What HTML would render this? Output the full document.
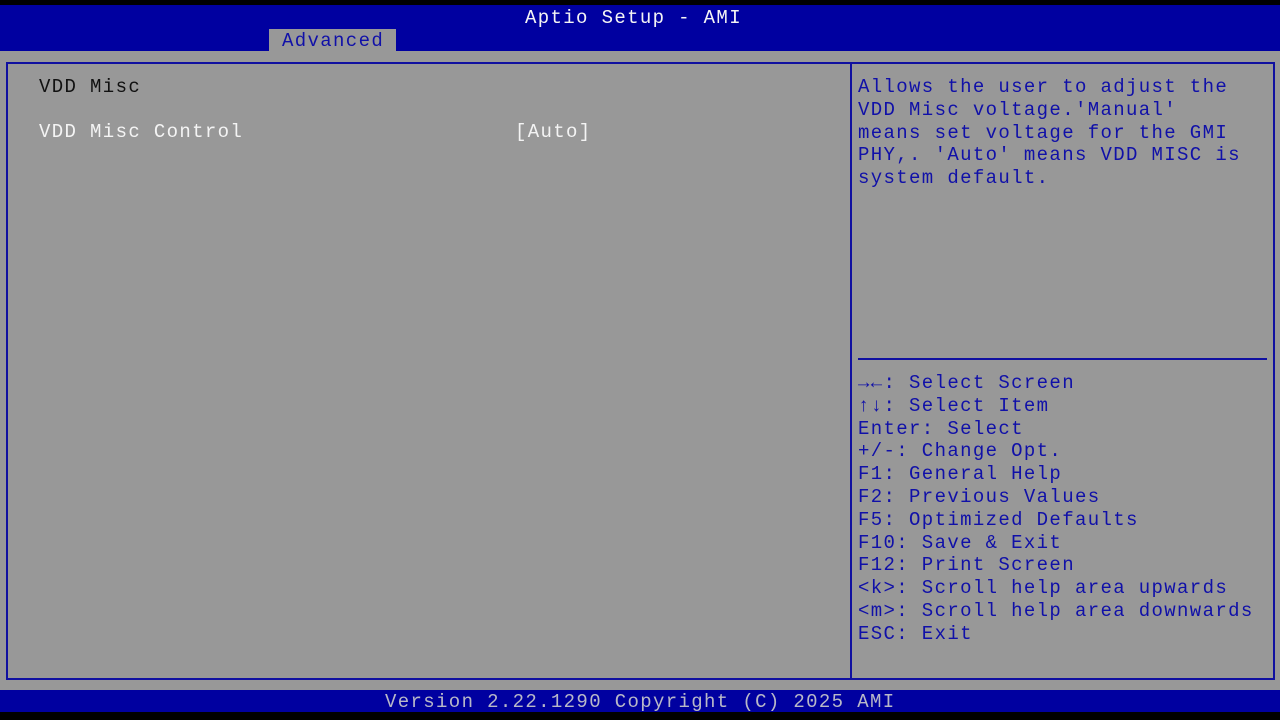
<!DOCTYPE html>
<html><head><style>
body{margin:0;width:1280px;height:720px;background:#000;position:relative;overflow:hidden;font-family:"Liberation Mono",monospace;font-size:19px;letter-spacing:1.36px}
div{position:absolute;white-space:pre;line-height:23px}
.w{color:#f4f4f4}.b{color:#1010a8}.k{color:#111}
</style></head><body>
<div style="left:0;top:5px;width:1280px;height:46px;background:#0000a0"></div>
<div class="w" style="left:525px;top:7px">Aptio Setup - AMI</div>
<div style="left:269px;top:29px;width:127px;height:22px;background:#989898"></div>
<div class="b" style="left:282px;top:30px">Advanced</div>
<div style="left:0;top:51px;width:1280px;height:639px;background:#989898"></div>
<div style="left:6px;top:62px;width:1265px;height:614px;border:2px solid #1010a0"></div>
<div style="left:850px;top:62px;width:2px;height:616px;background:#1010a0"></div>
<div style="left:858px;top:358px;width:409px;height:2px;background:#1010a0"></div>
<div class="k" style="left:39px;top:76px">VDD Misc</div>
<div class="w" style="left:39px;top:121px">VDD Misc Control</div>
<div class="w" style="left:515px;top:121px">[Auto]</div>
<div class="b" style="left:858px;top:76px;line-height:22.8px">Allows the user to adjust the
VDD Misc voltage.'Manual'
means set voltage for the GMI
PHY,. 'Auto' means VDD MISC is
system default.</div>
<div class="b" style="left:858px;top:372px;line-height:22.8px">→←: Select Screen
↑↓: Select Item
Enter: Select
+/-: Change Opt.
F1: General Help
F2: Previous Values
F5: Optimized Defaults
F10: Save &amp; Exit
F12: Print Screen
&lt;k&gt;: Scroll help area upwards
&lt;m&gt;: Scroll help area downwards
ESC: Exit</div>
<div style="left:0;top:690px;width:1280px;height:22px;background:#0000a0"></div>
<div style="left:385px;top:691px;color:#b8b8c8;line-height:23px">Version 2.22.1290 Copyright (C) 2025 AMI</div>
</body></html>
